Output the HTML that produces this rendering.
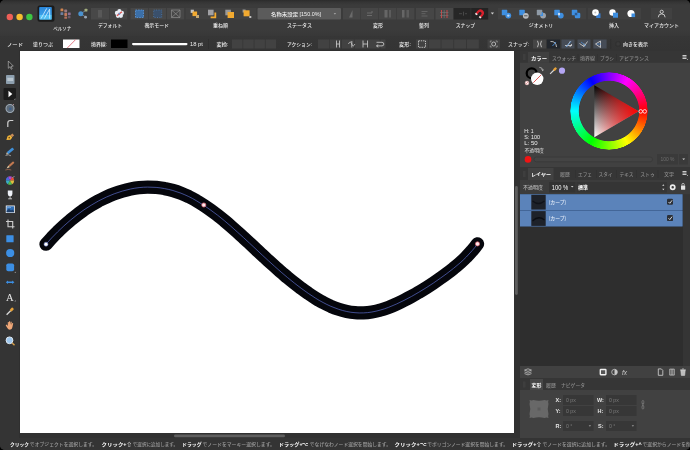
<!DOCTYPE html>
<html lang="ja"><head><meta charset="utf-8"><title>Affinity Designer</title>
<style>
html,body{margin:0;padding:0;background:#000;}
body{width:690px;height:450px;overflow:hidden;position:relative;font-family:"Liberation Sans","Noto Sans CJK JP",sans-serif;}
#win{position:absolute;left:0;top:0;width:690px;height:450px;background:#393939;border-radius:5px 5px 5px 5px;overflow:hidden;}
.abs{position:absolute;}
#wheel{position:absolute;left:570.2px;top:72.3px;width:78px;height:78px;border-radius:50%;
background:conic-gradient(from 90deg,#ff0000,#ffff00,#00ff00,#00ffff,#0000ff,#ff00ff,#ff0000);
-webkit-mask:radial-gradient(circle closest-side,transparent 0,transparent 76.5%,#000 78.5%,#000 98.5%,transparent 100%);
mask:radial-gradient(circle closest-side,transparent 0,transparent 76.5%,#000 78.5%,#000 98.5%,transparent 100%);}
svg{position:absolute;left:0;top:0;will-change:transform;}
text{font-family:"Liberation Sans","Noto Sans CJK JP",sans-serif;}
.l{font-size:4.800px;fill:#ececec;font-weight:500;}
.b{font-weight:bold;fill:#fff;}
.d{fill:#8a8a8a;}
.s{fill:#9a9a9a;}
</style></head><body>
<div id="win">
<!-- backgrounds -->
<div class="abs" style="left:0;top:0;width:690px;height:36px;background:linear-gradient(#2b2b2b 0,#343434 2px,#3b3b3b 5px,#3b3b3b 30px,#383838 36px)"></div>
<div class="abs" style="left:0;top:36px;width:690px;height:15px;background:linear-gradient(#363636,#343434)"></div>
<div class="abs" style="left:0;top:51px;width:20px;height:388px;background:#343434"></div>
<div class="abs" style="left:18.8px;top:49.5px;width:501.2px;height:389px;background:#2f2f2f"></div>
<div class="abs" style="left:20px;top:51.2px;width:493.5px;height:382.1px;background:#fff"></div>
<div class="abs" style="left:20px;top:433.3px;width:500px;height:4.7px;background:#313131"></div>
<div class="abs" style="left:513.5px;top:51px;width:6px;height:387px;background:#313131"></div>
<div class="abs" style="left:520px;top:51px;width:170px;height:387px;background:#414141"></div>
<div class="abs" style="left:0;top:438px;width:690px;height:12px;background:#343434"></div>
<div id="wheel"></div>
<svg id="ui" width="690" height="450" viewBox="0 0 690 450">
<g id="top">
<!-- traffic lights -->
<circle cx="9.8" cy="17" r="3.2" fill="#ee5f57"/><circle cx="19.6" cy="17" r="3.2" fill="#f6bd2f"/><circle cx="29.4" cy="17" r="3.2" fill="#3ec544"/>
<!-- persona -->
<rect x="37.500" y="5.600" width="17" height="16.200" rx="2" fill="#1b1b1b"/>
<defs><linearGradient id="pg" x1="0" y1="0" x2="0" y2="1"><stop offset="0" stop-color="#2b86d8"/><stop offset="0.62" stop-color="#3aa0ea"/><stop offset="0.66" stop-color="#55c4f6"/><stop offset="1" stop-color="#4fbef4"/></linearGradient></defs>
<rect x="39.200" y="7.100" width="12.600" height="12.700" rx=".8" fill="url(#pg)"/>
<path d="M41 18.600 L46.800 8.300 M44.300 18.600 L49.600 9.200 L49.600 18.600" stroke="#d6f0ff" stroke-width="0.800" fill="none"/>
<g><rect x="60.500" y="8.500" width="2.800" height="2.800" rx=".6" fill="#cf8450"/><rect x="64.300" y="9.600" width="2.800" height="2.800" rx=".6" fill="#9a7a82"/><rect x="60.500" y="12.300" width="2.800" height="2.800" rx=".6" fill="#6f7fa0"/><rect x="64.300" y="13.100" width="2.800" height="2.800" rx=".6" fill="#c47a5e"/><rect x="67.900" y="12.400" width="2.800" height="2.800" rx=".6" fill="#8a6f96"/><rect x="64.300" y="16.400" width="2.800" height="2.400" rx=".6" fill="#b0705e"/><rect x="67.900" y="15.900" width="2.600" height="2.400" rx=".6" fill="#6a5a6a"/></g>
<g><path d="M81 13.700 L86 10.200 M81 13.700 L85.500 17" stroke="#7f93a3" stroke-width="0.800"/><circle cx="80.800" cy="13.700" r="2.500" fill="#4a92cf"/><rect x="84.600" y="8.700" width="2.800" height="2.800" rx=".5" fill="#a3ad7e"/><circle cx="85.600" cy="17.200" r="1.400" fill="#9aa6b4"/></g>
<text class="l" x="62.200" y="30.200" text-anchor="middle" textLength="18" lengthAdjust="spacingAndGlyphs">ペルソナ</text>
<!-- default group -->
<rect x="91" y="8" width="18" height="11.5" fill="#484848"/><rect x="109.7" y="8" width="17.5" height="11.5" fill="#454545"/>
<rect x="98" y="10" width="4" height="7.5" fill="#585858"/>
<g transform="translate(119.400,13.700)"><g fill="#e9eef6"><circle cx="0" cy="-2.6" r="2.1"/><circle cx="2.5" cy="-.8" r="2.1"/><circle cx="1.5" cy="2.1" r="2.1"/><circle cx="-1.5" cy="2.1" r="2.1"/><circle cx="-2.5" cy="-.8" r="2.1"/></g><path d="M-2.5 2 L2.5 -2" stroke="#e0524a" stroke-width="1.3"/><circle cx="0" cy="0" r="1" fill="#6f8fd0"/></g>
<text class="l" x="110" y="27.300" text-anchor="middle" textLength="24" lengthAdjust="spacingAndGlyphs">デフォルト</text>
<!-- view mode -->
<rect x="130.5" y="8" width="17.5" height="11.5" fill="#474747"/><rect x="148.7" y="8" width="17.5" height="11.5" fill="#474747"/><rect x="166.9" y="8" width="17.3" height="11.5" fill="#474747"/>
<rect x="135.5" y="10" width="8" height="7.5" fill="#3b6fa8" stroke="#5a9be0" stroke-width="0.8" stroke-dasharray="1.6 1"/>
<rect x="153.7" y="10" width="8" height="7.5" fill="#3a506c" stroke="#4a78b0" stroke-width="0.8" stroke-dasharray="1 1.4"/>
<path d="M171.5 10 H180 V17.5 H171.5 Z M171.5 10 L180 17.5 M180 10 L171.5 17.5" stroke="#8c8c8c" stroke-width="0.7" fill="none"/>
<text class="l" x="156.700" y="27.300" text-anchor="middle" textLength="24.500" lengthAdjust="spacingAndGlyphs">表示モード</text>
<!-- order -->
<g id="ord">
<rect x="185.500" y="8" width="71" height="11.500" fill="#414141"/>
<rect x="190.700" y="9.700" width="3.200" height="3.200" fill="#c4c4c4"/><rect x="192.500" y="11.500" width="4.600" height="4.600" fill="#f2aa30"/><rect x="196" y="15" width="3" height="3" fill="#c8aa72"/>
<rect x="208" y="9.700" width="5.600" height="5.600" fill="#a0a0a4"/><path d="M215.300 12.600 V17.300 H210.600" stroke="#f2aa30" stroke-width="1.800" fill="none"/>
<rect x="225.300" y="9.700" width="5.600" height="5.600" fill="#9a9a9a"/><rect x="227.600" y="12" width="6.400" height="6" fill="#f2aa30"/>
<rect x="242.600" y="9.500" width="3" height="3" fill="#9a9a9a"/><rect x="243.600" y="10.300" width="6" height="6" fill="#f2aa30"/><rect x="249.300" y="16" width="2" height="2" fill="#c0c0c0"/>
</g>
<text class="l" x="220.5" y="27.300" text-anchor="middle" textLength="15" lengthAdjust="spacingAndGlyphs">重ね順</text>
<!-- status -->
<rect x="257.5" y="8" width="83.5" height="11.5" rx="1" fill="#5b5b5b"/>
<text x="296" y="15.6" text-anchor="middle" textLength="50" lengthAdjust="spacingAndGlyphs" style="font-size:5px;fill:#f2f2f2;font-weight:500">名称未設定 [150.0%]</text>
<path d="M333.7 13.2 l1.2 1.4 l1.2 -1.4 Z" fill="#bdbdbd"/>
<text class="l" x="299.5" y="27.300" text-anchor="middle" textLength="25" lengthAdjust="spacingAndGlyphs">ステータス</text>
<!-- transform group -->
<rect x="343" y="8" width="17.3" height="11.5" fill="#464646"/><rect x="361" y="8" width="17.3" height="11.5" fill="#464646"/><rect x="379" y="8" width="17.3" height="11.5" fill="#464646"/><rect x="397" y="8" width="17.3" height="11.5" fill="#464646"/>
<path d="M349 17.5 L352.5 10 V17.5 Z" fill="#6a6a6a"/><path d="M367 13 h5 v-2 M367 15.5 h5" stroke="#6a6a6a" stroke-width="1" fill="none"/><rect x="384.5" y="10" width="3" height="7.5" fill="#666"/><rect x="389" y="10" width="2" height="7.5" fill="#5c5c5c"/><rect x="402" y="10" width="2.5" height="7.5" fill="#666"/><rect x="406.5" y="10" width="2.5" height="7.5" fill="#5c5c5c"/>
<text class="l" x="378" y="27.300" text-anchor="middle" textLength="10" lengthAdjust="spacingAndGlyphs">変形</text>
<!-- align -->
<rect x="416" y="8" width="18" height="11.5" fill="#464646"/>
<path d="M421.5 11.5 h6 M421.5 13.7 h4 M421.5 16 h6" stroke="#636363" stroke-width="1"/>
<text class="l" x="424" y="27.300" text-anchor="middle" textLength="10" lengthAdjust="spacingAndGlyphs">整列</text>
<!-- snap -->
<rect x="435.5" y="8" width="17.5" height="11.5" fill="#484848"/><rect x="453.7" y="8" width="17" height="11.5" fill="#262626"/><rect x="471.2" y="8" width="17" height="11.5" fill="#232323"/>
<path d="M441.5 10 v8 M447 10 v8" stroke="#d84848" stroke-width="0.9"/><path d="M444.2 10 v8 M440 12.5 h8.5 M440 15.5 h8.5" stroke="#777" stroke-width="0.6"/>
<path d="M459 13.7 h3 M463.5 11.7 v4 M465 13.7 h2" stroke="#4c4c4c" stroke-width="0.9"/>
<g transform="translate(480,13.5) rotate(40)"><path d="M-3.6 3 V-0.5 A3.6 3.6 0 0 1 3.6 -0.5 V3 H1.4 V-0.3 A1.4 1.4 0 0 0 -1.4 -0.3 V3 Z" fill="#d8202c"/><rect x="-3.6" y="2" width="2.2" height="1.6" fill="#eee"/><rect x="1.4" y="2" width="2.2" height="1.6" fill="#eee"/></g>
<path d="M490.8 12.6 l1.6 1.9 l1.6 -1.9 Z" fill="#d0d0d0"/>
<text class="l" x="465.5" y="27.300" text-anchor="middle" textLength="19.5" lengthAdjust="spacingAndGlyphs">スナップ</text>
<!-- geometry -->
<rect x="498" y="8" width="88" height="11.5" fill="#414141"/>
<g id="geo" transform="translate(-1.2,0.300)">
<rect x="503" y="9.5" width="5.5" height="5.5" rx=".6" fill="#3f8fe0"/><circle cx="509.5" cy="15.3" r="2.9" fill="#3f8fe0"/><circle cx="509.5" cy="15.3" r="1.2" fill="#bcd8f4"/>
<rect x="520.5" y="9.5" width="5.5" height="5.5" rx=".6" fill="#3f8fe0"/><circle cx="527" cy="15.5" r="2.9" fill="#b9bcc0"/><rect x="525.3" y="15" width="3.4" height="1" fill="#555"/>
<rect x="538" y="9.5" width="5.5" height="5.5" rx=".6" fill="#8f9aa6"/><circle cx="544.3" cy="15.3" r="2.9" fill="#9aa2ac"/><path d="M541.5 15 h2 v-3" stroke="#3f8fe0" stroke-width="1.4" fill="none"/>
<rect x="555.5" y="9.5" width="5.5" height="5.5" rx=".6" fill="#3f8fe0"/><circle cx="562" cy="15.3" r="2.9" fill="#3f8fe0"/><rect x="559.3" y="12.6" width="1.8" height="2.4" fill="#d8e6f6"/>
<rect x="573" y="9.5" width="5.5" height="5.5" rx=".6" fill="#3f8fe0"/><rect x="576" y="12.5" width="5.5" height="5.5" rx="1.2" fill="#3f8fe0"/><rect x="576" y="12.5" width="2.5" height="2.5" fill="#2a5a94"/>
</g>
<text class="l" x="541" y="27.300" text-anchor="middle" textLength="24.5" lengthAdjust="spacingAndGlyphs">ジオメトリ</text>
<!-- insert -->
<rect x="588" y="8" width="53" height="11.5" fill="#414141"/>
<rect x="596.200" y="13.300" width="4.300" height="4.700" fill="#3a7fd0"/><circle cx="595.500" cy="12.600" r="3.300" fill="#fff"/><circle cx="595.300" cy="12.400" r="1" fill="#c4c4c4"/>
<circle cx="612.5" cy="12.5" r="3.2" fill="#fff"/><rect x="613" y="12.7" width="5" height="5" fill="#3f8fe0"/>
<circle cx="631" cy="13.5" r="3.6" fill="#fff"/><rect x="631.5" y="13.5" width="3.6" height="3.6" fill="#3f8fe0"/>
<text class="l" x="614" y="27.300" text-anchor="middle" textLength="10" lengthAdjust="spacingAndGlyphs">挿入</text>
<!-- account -->
<rect x="651" y="8" width="21" height="11.5" fill="#414141"/>
<circle cx="661.7" cy="11.8" r="1.6" fill="none" stroke="#e6e6e6" stroke-width="0.8"/><path d="M658.3 17.3 a3.4 3.4 0 0 1 6.8 0" fill="none" stroke="#e6e6e6" stroke-width="0.8"/>
<text class="l" x="661.5" y="27.300" text-anchor="middle" textLength="35" lengthAdjust="spacingAndGlyphs">マイアカウント</text>
</g>

<g id="ctx">
<text class="l" x="15" y="45.600" text-anchor="middle" textLength="16" lengthAdjust="spacingAndGlyphs">ノード</text>
<text class="l" x="43" y="45.600" text-anchor="middle" textLength="20" lengthAdjust="spacingAndGlyphs">塗りつぶ</text>
<rect x="63" y="39.5" width="16.5" height="8.5" fill="#fff"/><path d="M67.300 48 L75.700 39.500" stroke="#e06a78" stroke-width="0.900"/>
<text class="l" x="99" y="45.600" text-anchor="middle" textLength="16" lengthAdjust="spacingAndGlyphs">境界線:</text>
<rect x="111" y="39.5" width="16.5" height="8.5" fill="#000"/>
<rect x="132" y="42.9" width="55.5" height="2.3" rx="1.1" fill="#fff"/>
<text class="l" x="196.5" y="45.600" text-anchor="middle" textLength="13" lengthAdjust="spacingAndGlyphs">18 pt</text>
<rect x="208" y="39" width="0.6" height="10" fill="#2c2c2c"/>
<text class="l" x="222.5" y="45.600" text-anchor="middle" textLength="12" lengthAdjust="spacingAndGlyphs">変換:</text>
<g fill="#424242"><rect x="232" y="39.5" width="10.5" height="9"/><rect x="243.2" y="39.5" width="10.5" height="9"/><rect x="254.4" y="39.5" width="10.5" height="9"/><rect x="265.6" y="39.5" width="10.5" height="9"/></g>
<text class="l" x="299.5" y="45.600" text-anchor="middle" textLength="25" lengthAdjust="spacingAndGlyphs">アクション:</text>
<g fill="#424242"><rect x="318" y="39.5" width="11" height="9"/><rect x="329.7" y="39.5" width="11.5" height="9"/><rect x="341.9" y="39.5" width="12" height="9"/><rect x="354.6" y="39.5" width="12" height="9"/><rect x="367.3" y="39.5" width="12.5" height="9"/><rect x="380.5" y="39.5" width="5" height="9"/></g>
<g stroke="#d2d2d2" stroke-width="0.8" fill="none">
<path d="M336.5 40.5 v7 M339.5 40.5 v7 M336.5 44 h3"/>
<path d="M348.5 44 c1 -2.5 2.5 -2.5 3.3 0 c.8 2.5 2 2.500 3 0 M351.8 41 v6.500"/>
<path d="M363 40.500 v7 M367.500 40.500 v7 M363 44 h4.500"/>
<path d="M376.500 42.300 h5.500 a1.800 1.800 0 0 1 0 3.600 h-5.500 M378.200 44.600 l-1.700 1.300 l1.700 1.300"/>
</g>
<text class="l" x="405" y="45.600" text-anchor="middle" textLength="12" lengthAdjust="spacingAndGlyphs">変形:</text>
<g fill="#424242"><rect x="416" y="39.5" width="12" height="9"/><rect x="428.7" y="39.5" width="12" height="9"/><rect x="441.4" y="39.5" width="12" height="9"/><rect x="454.1" y="39.5" width="12" height="9"/><rect x="466.8" y="39.5" width="12" height="9"/><rect x="487.5" y="39.5" width="12.500" height="9"/></g>
<rect x="418.500" y="40.800" width="7" height="6.500" fill="none" stroke="#e0e0e0" stroke-width="0.800" stroke-dasharray="1.400 .9"/>
<circle cx="493.700" cy="44" r="2" fill="none" stroke="#d0d0d0" stroke-width="0.800"/><path d="M490.300 41 h1.500 M490.300 41 v1.500 M497.200 41 h-1.500 M497.200 41 v1.500 M490.300 47 h1.500 M490.300 47 v-1.500 M497.200 47 h-1.500 M497.200 47 v-1.500" stroke="#bbb" stroke-width="0.600"/>
<text class="l" x="518.500" y="45.600" text-anchor="middle" textLength="21" lengthAdjust="spacingAndGlyphs">スナップ:</text>
<rect x="533" y="39.500" width="13" height="9" fill="#454545"/><rect x="547" y="39.500" width="13" height="9" fill="#22262c"/><rect x="561.500" y="39.500" width="13" height="9" fill="#464c56"/><rect x="577.500" y="39.500" width="13" height="9" fill="#464c56"/><rect x="593.300" y="39.500" width="13.300" height="9" fill="#464c56"/>
<g stroke="#dcdcdc" stroke-width="0.800" fill="none">
<path d="M537.500 40.800 q2 3.200 0 6.400 M541.500 40.800 q-2 3.200 0 6.400"/>
<path d="M550.500 41.500 q5.500 -.5 6 5.500"/>
<path d="M565 45.500 h7 M566.500 47 l4 -6 M569.800 47 l2 -3"/>
<path d="M579.500 43.500 l4.500 3 l3.500 -5 M584 46.500 v-3"/>
<path d="M595.500 44 l5 -3 v6.500 Z"/>
</g>
<path d="M552.500 46 l3.500 -4" stroke="#4a90e0" stroke-width="0.900"/>
<path d="M566 47 l5 -5.500 M581 42 l5 4 M597 44 h4" stroke="#4a90e0" stroke-width="0.700"/>
<rect x="610.500" y="39" width="0.600" height="10" fill="#2c2c2c"/>
<rect x="616" y="41.800" width="4.200" height="4.200" rx=".8" fill="#3a3a3a" stroke="#2a2a2a" stroke-width="0.500"/>
<text class="l" x="635.500" y="45.600" text-anchor="middle" textLength="25" lengthAdjust="spacingAndGlyphs">向きを表示</text>
</g>

<g id="tools">
<!-- move -->
<path d="M8.300 61 L8.300 68.300 L10 66.700 L11.200 69.300 L12.200 68.800 L11 66.300 L13.300 66.100 Z" fill="#2c2c2c" stroke="#c4c4c4" stroke-width="0.600"/>
<!-- artboard -->
<rect x="6" y="75" width="8.500" height="9" rx=".8" fill="#8d9fae"/><rect x="7.300" y="77.800" width="5.900" height="3.200" fill="#b9c6d0"/>
<!-- node (active) -->
<rect x="3.500" y="88" width="12.500" height="12" rx="1" fill="#1c1c1c"/><path d="M8.500 90.800 L12.300 94 L8.500 97.200 Z" fill="#fff"/><path d="M13.800 99.800 l1.600 0 l0 -1.600 Z" fill="#999"/>
<!-- spiral -->
<circle cx="10" cy="108.500" r="4" fill="#5c6a78" stroke="#9eaab6" stroke-width="1.100"/><circle cx="10.300" cy="108.700" r="1.300" fill="#3e5f8c"/><path d="M12.500 105.500 l1.500 -1.500" stroke="#c89aa0" stroke-width="0.800"/>
<!-- corner -->
<path d="M7.800 127 V123 Q7.800 120.500 10.300 120.500 H13.300" fill="none" stroke="#d0d0d0" stroke-width="1.200"/>
<!-- pen -->
<g transform="translate(9.500,137.500) rotate(-38)"><path d="M-4 0 L-0.500 -2.400 L2.200 -1.600 L2.200 1.600 L-0.500 2.400 Z" fill="#f2b53a"/><rect x="2.200" y="-1.300" width="2.600" height="2.600" fill="#c98e5a"/><circle cx="-0.300" cy="0" r=".8" fill="#6a4a1a"/></g>
<!-- pencil -->
<g transform="translate(10.300,151) rotate(-40)"><rect x="-3.500" y="-1.300" width="7.500" height="2.600" rx=".6" fill="#3f8fd8"/><path d="M-3.500 -1.300 L-5.500 0 L-3.500 1.300 Z" fill="#d8c8b0"/></g><path d="M5.500 155.500 q3 -1.500 5.500 .3" stroke="#b8b8b8" stroke-width="0.700" fill="none"/>
<!-- brush -->
<g transform="translate(10.500,165) rotate(-42)"><rect x="-2" y="-1.100" width="6.500" height="2.200" rx=".8" fill="#c07850"/><path d="M-2 -1.100 L-5.300 0 L-2 1.100 Z" fill="#e6c8a0"/></g><path d="M5.300 170 q3 -1.200 6 0" stroke="#a06a50" stroke-width="0.800" fill="none"/>
<!-- color wheel tool -->
<g transform="translate(10,180.500)"><path d="M0 0 L4.200 0 A4.200 4.200 0 0 0 2.100 -3.640 Z" fill="#e8503a"/><path d="M0 0 L2.100 -3.640 A4.200 4.200 0 0 0 -2.100 -3.640 Z" fill="#b04ad0"/><path d="M0 0 L-2.100 -3.640 A4.200 4.200 0 0 0 -4.200 0 Z" fill="#4a6ae0"/><path d="M0 0 L-4.200 0 A4.200 4.200 0 0 0 -2.100 3.640 Z" fill="#38b0c8"/><path d="M0 0 L-2.100 3.640 A4.200 4.200 0 0 0 2.100 3.640 Z" fill="#50c050"/><path d="M0 0 L2.100 3.640 A4.200 4.200 0 0 0 4.200 0 Z" fill="#e0c040"/><path d="M2.600 -2.600 l1.800 -1.800" stroke="#bbb" stroke-width="0.800"/></g>
<!-- glass -->
<path d="M7.800 190.500 h4.600 v3.600 a2.300 2.300 0 0 1 -4.600 0 Z" fill="#eef2f8"/><path d="M10.100 196.400 v2.200 M8.200 198.800 h3.800" stroke="#e6e6e6" stroke-width="0.800"/>
<!-- image -->
<rect x="5.800" y="205.500" width="9" height="7.500" fill="#f4f4f4"/><rect x="6.600" y="206.300" width="7.400" height="5.900" fill="#2f6fb8"/><path d="M6.600 211 l2.400 -2.200 l2 1.700 l1.400 -1 l1.600 1.500 v1.200 h-7.400 Z" fill="#1f3f68"/><path d="M7 208 q2 -1.600 4 -.4" stroke="#9fc4ec" stroke-width="0.700" fill="none"/>
<!-- crop -->
<path d="M8 219.500 v7.200 h6.500 M6 221.500 h6.700 v7" fill="none" stroke="#cfcfcf" stroke-width="1.100"/>
<!-- rect -->
<rect x="6.300" y="235.300" width="7.300" height="7" rx=".5" fill="#3c8fe4"/>
<!-- ellipse -->
<circle cx="10.200" cy="253" r="4.100" fill="#3c8fe4"/>
<!-- rounded rect -->
<rect x="6.300" y="263.500" width="7.800" height="7.800" rx="1.800" fill="#3c8fe4"/><path d="M14.300 273 l1.500 0 l0 -1.500 Z" fill="#999"/>
<!-- arrows -->
<path d="M5.800 282.300 l2.200 -1.800 v1.100 h4.200 v-1.100 l2.200 1.800 l-2.200 1.800 v-1.100 h-4.200 v1.100 Z" fill="#3c8fe4"/>
<!-- text -->
<text x="9.700" y="300.800" text-anchor="middle" style="font-family:'Liberation Serif',serif;font-size:10.500px;fill:#e8e8e8">A</text><path d="M14.300 301.500 l1.500 0 l0 -1.500 Z" fill="#999"/>
<!-- eyedropper -->
<g transform="translate(10,311.300) rotate(-45)"><rect x="-4.800" y="-.7" width="6" height="1.400" fill="#d9d9d9"/><rect x="0.600" y="-1.300" width="3.800" height="2.600" rx=".8" fill="#e6a23a"/></g>
<!-- hand -->
<path d="M7 327.500 l-1.300 -2.300 l.9 -.6 l1.200 1.300 v-3.800 h1 v2.500 l.3 -3.300 h1 l.1 3.300 l.5 -2.900 h1 l-.2 3.200 l.8 -1.900 l.9 .3 l-.8 4 q-.3 2.400 -2.500 2.400 q-1.800 0 -2.900 -2.200 Z" fill="#f0a878"/>
<!-- zoom -->
<circle cx="9.500" cy="340.300" r="3.400" fill="#9fc8ee" stroke="#dfe9f2" stroke-width="1"/><path d="M12.200 343 l2.300 2.300" stroke="#d8a04a" stroke-width="1.400"/>
</g>

<!--CANVAS-->
<rect x="515" y="186" width="2.800" height="109" rx="1.400" fill="#5e5e5e"/>
<rect x="174" y="434.500" width="111" height="2.800" rx="1.400" fill="#5e5e5e"/>
<g id="curve">
<path d="M46.0 244.2 C47.9 242.1 49.8 240.0 51.7 237.9 C53.6 235.9 55.6 233.8 57.7 231.8 C59.7 229.8 61.8 227.8 63.9 225.9 C66.0 224.0 68.1 222.1 70.3 220.3 C72.5 218.4 74.8 216.6 77.0 214.9 C79.3 213.1 81.6 211.5 84.0 209.8 C86.4 208.2 88.8 206.7 91.2 205.2 C93.6 203.7 96.1 202.3 98.6 200.9 C101.2 199.6 103.7 198.3 106.3 197.1 C108.9 195.9 111.5 194.8 114.2 193.8 C116.9 192.8 119.6 191.9 122.3 191.1 C125.1 190.3 127.8 189.6 130.6 189.0 C133.4 188.4 136.2 187.9 139.1 187.6 C141.9 187.3 144.7 187.1 147.6 187.1 C150.4 187.1 153.3 187.2 156.1 187.4 C158.9 187.7 161.8 188.0 164.6 188.6 C167.4 189.1 170.1 189.7 172.9 190.5 C175.6 191.3 178.3 192.2 181.0 193.2 C183.6 194.2 186.2 195.4 188.8 196.6 C191.4 197.9 193.9 199.2 196.3 200.7 C198.8 202.1 201.2 203.6 203.6 205.2 C206.0 206.8 208.4 208.4 210.7 210.1 C213.0 211.8 215.3 213.5 217.6 215.2 C219.8 217.0 222.1 218.8 224.3 220.6 C226.5 222.5 228.6 224.3 230.8 226.2 C233.0 228.1 235.1 230.0 237.2 231.9 C239.3 233.8 241.4 235.7 243.5 237.6 C245.6 239.6 247.7 241.5 249.8 243.4 C251.9 245.4 253.9 247.3 256.0 249.2 C258.1 251.1 260.1 253.1 262.2 255.0 C264.3 256.9 266.3 258.8 268.4 260.7 C270.5 262.6 272.6 264.5 274.7 266.4 C276.8 268.3 279.0 270.2 281.1 272.1 C283.3 273.9 285.4 275.8 287.6 277.6 C289.8 279.4 292.0 281.2 294.3 283.0 C296.6 284.8 298.9 286.6 301.2 288.3 C303.5 290.1 305.9 291.8 308.3 293.4 C310.7 295.1 313.1 296.7 315.6 298.2 C318.0 299.7 320.5 301.2 323.1 302.5 C325.6 303.9 328.2 305.1 330.8 306.3 C333.4 307.4 336.0 308.4 338.7 309.3 C341.3 310.2 344.0 310.9 346.8 311.5 C349.5 312.1 352.2 312.5 355.0 312.7 C357.8 313.0 360.7 313.0 363.5 312.9 C366.3 312.8 369.1 312.5 371.9 312.0 C374.7 311.5 377.5 310.9 380.2 310.1 C383.0 309.4 385.7 308.4 388.4 307.4 C391.0 306.4 393.7 305.3 396.3 304.1 C398.9 302.9 401.5 301.7 404.0 300.4 C406.6 299.1 409.1 297.8 411.6 296.4 C414.0 295.1 416.5 293.7 418.9 292.2 C421.3 290.8 423.7 289.3 426.1 287.8 C428.5 286.3 430.8 284.8 433.2 283.2 C435.5 281.6 437.8 280.0 440.1 278.4 C442.4 276.8 444.7 275.2 446.9 273.5 C449.2 271.8 451.4 270.1 453.6 268.3 C455.8 266.6 458.0 264.8 460.1 262.9 C462.2 261.0 464.3 259.1 466.3 257.0 C468.3 255.0 470.2 252.9 472.1 250.7 C474.0 248.6 475.8 246.3 477.5 243.9" fill="none" stroke="#05060c" stroke-width="13.300" stroke-linecap="round"/>
<path d="M46.0 244.2 C47.9 242.1 49.8 240.0 51.7 237.9 C53.6 235.9 55.6 233.8 57.7 231.8 C59.7 229.8 61.8 227.8 63.9 225.9 C66.0 224.0 68.1 222.1 70.3 220.3 C72.5 218.4 74.8 216.6 77.0 214.9 C79.3 213.1 81.6 211.5 84.0 209.8 C86.4 208.2 88.8 206.7 91.2 205.2 C93.6 203.7 96.1 202.3 98.6 200.9 C101.2 199.6 103.7 198.3 106.3 197.1 C108.9 195.9 111.5 194.8 114.2 193.8 C116.9 192.8 119.6 191.9 122.3 191.1 C125.1 190.3 127.8 189.6 130.6 189.0 C133.4 188.4 136.2 187.9 139.1 187.6 C141.9 187.3 144.7 187.1 147.6 187.1 C150.4 187.1 153.3 187.2 156.1 187.4 C158.9 187.7 161.8 188.0 164.6 188.6 C167.4 189.1 170.1 189.7 172.9 190.5 C175.6 191.3 178.3 192.2 181.0 193.2 C183.6 194.2 186.2 195.4 188.8 196.6 C191.4 197.9 193.9 199.2 196.3 200.7 C198.8 202.1 201.2 203.6 203.6 205.2 C206.0 206.8 208.4 208.4 210.7 210.1 C213.0 211.8 215.3 213.5 217.6 215.2 C219.8 217.0 222.1 218.8 224.3 220.6 C226.5 222.5 228.6 224.3 230.8 226.2 C233.0 228.1 235.1 230.0 237.2 231.9 C239.3 233.8 241.4 235.7 243.5 237.6 C245.6 239.6 247.7 241.5 249.8 243.4 C251.9 245.4 253.9 247.3 256.0 249.2 C258.1 251.1 260.1 253.1 262.2 255.0 C264.3 256.9 266.3 258.8 268.4 260.7 C270.5 262.6 272.6 264.5 274.7 266.4 C276.8 268.3 279.0 270.2 281.1 272.1 C283.3 273.9 285.4 275.8 287.6 277.6 C289.8 279.4 292.0 281.2 294.3 283.0 C296.6 284.8 298.9 286.6 301.2 288.3 C303.5 290.1 305.9 291.8 308.3 293.4 C310.7 295.1 313.1 296.7 315.6 298.2 C318.0 299.7 320.5 301.2 323.1 302.5 C325.6 303.9 328.2 305.1 330.8 306.3 C333.4 307.4 336.0 308.4 338.7 309.3 C341.3 310.2 344.0 310.9 346.8 311.5 C349.5 312.1 352.2 312.5 355.0 312.7 C357.8 313.0 360.7 313.0 363.5 312.9 C366.3 312.8 369.1 312.5 371.9 312.0 C374.7 311.5 377.5 310.9 380.2 310.1 C383.0 309.4 385.7 308.4 388.4 307.4 C391.0 306.4 393.7 305.3 396.3 304.1 C398.9 302.9 401.5 301.7 404.0 300.4 C406.6 299.1 409.1 297.8 411.6 296.4 C414.0 295.1 416.5 293.7 418.9 292.2 C421.3 290.8 423.7 289.3 426.1 287.8 C428.5 286.3 430.8 284.8 433.2 283.2 C435.5 281.6 437.8 280.0 440.1 278.4 C442.4 276.8 444.7 275.2 446.9 273.5 C449.2 271.8 451.4 270.1 453.6 268.3 C455.8 266.6 458.0 264.8 460.1 262.9 C462.2 261.0 464.3 259.1 466.3 257.0 C468.3 255.0 470.2 252.9 472.1 250.7 C474.0 248.6 475.8 246.3 477.5 243.9" fill="none" stroke="#5a6cc8" stroke-width="0.7"/>
<circle cx="46" cy="244.2" r="2" fill="#fff" stroke="#6a7ac8" stroke-width="0.6"/>
<circle cx="203.8" cy="205" r="2.1" fill="#ffe8ec" stroke="#e06070" stroke-width="0.7"/>
<circle cx="477.5" cy="243.9" r="2.1" fill="#ffe8ec" stroke="#e06070" stroke-width="0.7"/>
</g>
<g id="panel">
<!-- color tab header -->
<rect x="520" y="51" width="170" height="11.700" fill="#363636"/>
<rect x="528" y="52" width="21" height="10.700" fill="#404040"/>
<rect x="523" y="54" width="2.500" height="6" fill="#3e3e3e"/>
<text class="l b" x="539" y="59.700" text-anchor="middle" textLength="16" lengthAdjust="spacingAndGlyphs">カラー</text>
<text class="l d" x="564" y="59.700" text-anchor="middle" textLength="24" lengthAdjust="spacingAndGlyphs">スウォッチ</text>
<text class="l d" x="587.500" y="59.700" text-anchor="middle" textLength="15" lengthAdjust="spacingAndGlyphs">境界線</text>
<text class="l d" x="607" y="59.700" text-anchor="middle" textLength="14" lengthAdjust="spacingAndGlyphs">ブラシ</text>
<text class="l d" x="634" y="59.700" text-anchor="middle" textLength="30" lengthAdjust="spacingAndGlyphs">アピアランス</text>
<path d="M578 54 v7 M597.500 54 v7 M616.500 54 v7" stroke="#2e2e2e" stroke-width="0.500"/>
<path d="M682.500 55.500 h4 M682.500 57 h4 M682.500 58.500 h4" stroke="#ddd" stroke-width="0.900"/><path d="M686.800 59 l1.300 0 l-.65 .9 Z" fill="#ddd"/>
<!-- stroke/fill selectors -->
<circle cx="531.700" cy="73.300" r="5" fill="none" stroke="#000" stroke-width="2.200"/>
<circle cx="537.200" cy="78.800" r="6.200" fill="#fff"/><path d="M533.300 82.700 L541.100 74.900" stroke="#e05a5a" stroke-width="1"/>
<circle cx="527" cy="83" r="1.900" fill="#fff" stroke="#e8a0a0" stroke-width="0.500"/><path d="M526 84 l2 -2" stroke="#e05a5a" stroke-width="0.600"/>
<path d="M539.300 67.300 q3.300 -.2 3.400 3.400 M542.700 70.700 l-1 -1.200 M542.700 70.700 l1.100 -1.100" stroke="#cfcfcf" stroke-width="0.700" fill="none"/>
<g transform="translate(553.300,70.700) rotate(-45)"><rect x="-4.500" y="-.6" width="5.500" height="1.200" fill="#d8d8d8"/><rect x=".6" y="-1.200" width="3.600" height="2.400" rx=".7" fill="#e6a23a"/></g>
<circle cx="562" cy="70.700" r="3.100" fill="#b4a6f4"/>
<!-- triangle -->
<defs>
<linearGradient id="tg1" gradientUnits="userSpaceOnUse" x1="594.300" y1="111.300" x2="638.500" y2="111.300"><stop offset="0" stop-color="#ff0000" stop-opacity="0"/><stop offset="1" stop-color="#ff0000" stop-opacity="1"/></linearGradient>
<linearGradient id="tg0" gradientUnits="userSpaceOnUse" x1="594.300" y1="85.800" x2="594.300" y2="136.800"><stop offset="0" stop-color="#000"/><stop offset="1" stop-color="#fff"/></linearGradient>
</defs>
<path d="M594.300 85.300 L638.500 111.300 L594.300 137.300 Z" fill="url(#tg0)"/>
<path d="M594.300 85.300 L638.500 111.300 L594.300 137.300 Z" fill="url(#tg1)"/>
<circle cx="640.700" cy="111.400" r="1.800" fill="none" stroke="#fff" stroke-width="0.800"/><circle cx="644.700" cy="111.400" r="1.800" fill="none" stroke="#fff" stroke-width="0.800"/>
<!-- HSL -->
<text x="524.300" y="132.500" textLength="9.300" lengthAdjust="spacingAndGlyphs" style="font-size:5.900px;fill:#f0f0f0">H: 1</text>
<text x="524.300" y="138.700" textLength="15.600" lengthAdjust="spacingAndGlyphs" style="font-size:5.900px;fill:#f0f0f0">S: 100</text>
<text x="524.300" y="145.100" textLength="13.400" lengthAdjust="spacingAndGlyphs" style="font-size:5.900px;fill:#f0f0f0">L: 50</text>
<text class="l" x="524.500" y="152.300" textLength="19.500" lengthAdjust="spacingAndGlyphs" style="fill:#c8c8c8">不透明度</text>
<circle cx="528" cy="159.400" r="3.300" fill="#f01414"/>
<rect x="534" y="157" width="118.500" height="4.800" rx="2.400" fill="#444" stroke="#383838" stroke-width="0.800"/>
<rect x="657" y="154" width="21" height="10.500" fill="#3a3a3a"/><rect x="679" y="154" width="9" height="10.500" fill="#3a3a3a"/>
<text class="l" x="667.500" y="161.200" text-anchor="middle" textLength="14" lengthAdjust="spacingAndGlyphs" style="fill:#6e6e6e">100 %</text>
<path d="M682.300 158.400 l1.400 1.700 l1.400 -1.700 Z" fill="#d6d6d6"/>
<!-- layers header -->
<rect x="520" y="167" width="170" height="13" fill="#363636"/>
<rect x="528" y="168" width="25.500" height="12" fill="#424242"/>
<rect x="523" y="171" width="2.500" height="6" fill="#3e3e3e"/>
<text class="l b" x="541" y="176.200" text-anchor="middle" textLength="20" lengthAdjust="spacingAndGlyphs">レイヤー</text>
<text class="l d" x="565" y="176.200" text-anchor="middle" textLength="10" lengthAdjust="spacingAndGlyphs">履歴</text>
<text class="l d" x="585" y="176.200" text-anchor="middle" textLength="14" lengthAdjust="spacingAndGlyphs">エフェ</text>
<text class="l d" x="605.500" y="176.200" text-anchor="middle" textLength="14" lengthAdjust="spacingAndGlyphs">スタイ</text>
<text class="l d" x="626.500" y="176.200" text-anchor="middle" textLength="14" lengthAdjust="spacingAndGlyphs">テキス</text>
<text class="l d" x="647.500" y="176.200" text-anchor="middle" textLength="14.500" lengthAdjust="spacingAndGlyphs">ストゥ</text>
<text class="l d" x="669" y="176.200" text-anchor="middle" textLength="10" lengthAdjust="spacingAndGlyphs">文字</text>
<path d="M575.500 170 v8 M596.500 170 v8 M616.500 170 v8 M636.500 170 v8 M658 170 v8" stroke="#2e2e2e" stroke-width="0.500"/>
<path d="M682.500 171.500 h4 M682.500 173 h4 M682.500 174.500 h4" stroke="#ddd" stroke-width="0.900"/><path d="M686.800 175 l1.300 0 l-.65 .9 Z" fill="#ddd"/>
<!-- opacity row -->
<rect x="520" y="180" width="170" height="14.200" fill="#3c3c3c"/>
<text class="l" x="533" y="188.700" text-anchor="middle" textLength="20" lengthAdjust="spacingAndGlyphs" style="fill:#b4b4b4">不透明度</text>
<rect x="549" y="182" width="26.500" height="10.500" fill="#333"/>
<text x="560" y="189.600" text-anchor="middle" textLength="16.500" lengthAdjust="spacingAndGlyphs" style="font-size:6.800px;fill:#fafafa">100 %</text>
<path d="M570.900 186 l1.300 1.600 l1.300 -1.600 Z" fill="#ccc"/>
<rect x="576.500" y="182" width="90.500" height="10.500" fill="#353535"/>
<text class="l b" x="583" y="189" text-anchor="middle" textLength="10" lengthAdjust="spacingAndGlyphs">標準</text>
<path d="M662.200 185.700 l1.100 -1.400 l1.100 1.400 Z M662.200 188.800 l1.100 1.400 l1.100 -1.400 Z" fill="#e0e0e0"/>
<circle cx="672.700" cy="187.300" r="2.100" fill="none" stroke="#ececec" stroke-width="1.700"/>
<rect x="681" y="185.500" width="4.200" height="4.300" rx=".5" fill="#e4e4e4"/><path d="M681.900 185.500 v-.9 a1.200 1.200 0 0 1 2.400 0 v.9" fill="none" stroke="#e4e4e4" stroke-width="0.700"/>
<!-- list area -->
<rect x="520" y="194.200" width="163" height="171.800" fill="#2e2e2e"/>
<rect x="683" y="194.200" width="7" height="171.800" fill="#353535"/>
<rect x="520" y="194.300" width="162.500" height="32.100" fill="#32507c"/>
<rect x="520" y="194.300" width="162.500" height="15.800" fill="#5b83ba"/>
<rect x="520" y="210.600" width="162.500" height="15.800" fill="#5b83ba"/>
<rect x="531.300" y="194.800" width="14.400" height="14.800" fill="#1e222a"/><rect x="531.300" y="211.100" width="14.400" height="14.800" fill="#1e222a"/>
<path d="M532.500 201 q6 5 12 0" stroke="#10131a" stroke-width="1.300" fill="none"/><path d="M532.500 221 q6 -6 12 -1" stroke="#0c0e14" stroke-width="1.300" fill="none"/>
<text class="l" x="557.500" y="204" text-anchor="middle" textLength="17.500" lengthAdjust="spacingAndGlyphs" style="fill:#e2ebf8">(カーブ)</text>
<text class="l" x="557.500" y="220.300" text-anchor="middle" textLength="17.500" lengthAdjust="spacingAndGlyphs" style="fill:#e2ebf8">(カーブ)</text>
<rect x="667" y="198.800" width="6" height="6" rx="1.200" fill="#2a2f38"/><path d="M668.500 202 l1.300 1.300 l2.300 -3" stroke="#e8e8e8" stroke-width="0.900" fill="none"/>
<rect x="667" y="215.100" width="6" height="6" rx="1.200" fill="#2a2f38"/><path d="M668.500 218.300 l1.300 1.300 l2.300 -3" stroke="#e8e8e8" stroke-width="0.900" fill="none"/>
<!-- layers bottom toolbar -->
<rect x="520" y="366" width="170" height="12" fill="#414141"/>
<g transform="translate(0,0.600)">
<g fill="none" stroke="#cfcfcf" stroke-width="0.700"><path d="M524.500 369.500 l3.500 -1.300 l3.500 1.300 l-3.500 1.300 Z M524.500 371.300 l3.500 1.300 l3.500 -1.300 M524.500 373 l3.500 1.300 l3.500 -1.300"/></g>
<rect x="600.300" y="368.900" width="5.600" height="5.200" rx=".6" fill="#555" stroke="#f0f0f0" stroke-width="1.400"/>
<circle cx="614.500" cy="371.500" r="2.800" fill="none" stroke="#c8c8c8" stroke-width="0.800"/><path d="M614.500 368.700 a2.800 2.800 0 0 1 0 5.600 Z" fill="#c8c8c8"/>
<text x="624.500" y="374" text-anchor="middle" style="font-size:6.500px;font-style:italic;fill:#c8c8c8">fx</text>
<path d="M658.300 368.300 h3 l1.500 1.500 v4.900 h-4.500 Z" fill="none" stroke="#d8d8d8" stroke-width="0.800"/>
<path d="M669.700 368.500 h4.600 v6 h-4.600 Z M671.200 368.500 v6 M672.800 368.500 v6" fill="none" stroke="#d0d0d0" stroke-width="0.700"/>
<path d="M680.800 369.500 h4.400 l-.5 5.300 h-3.400 Z M680 369.300 h6 M682 368.300 h2" fill="#bdbdbd" stroke="#d0d0d0" stroke-width="0.600"/>
</g>
<!-- transform header -->
<rect x="520" y="378" width="170" height="12" fill="#363636"/>
<rect x="530" y="379" width="13" height="11" fill="#484848"/>
<rect x="523" y="381.500" width="2.500" height="6" fill="#3e3e3e"/>
<text class="l b" x="536.500" y="387" text-anchor="middle" textLength="10" lengthAdjust="spacingAndGlyphs">変形</text>
<text class="l d" x="551" y="387" text-anchor="middle" textLength="10" lengthAdjust="spacingAndGlyphs">履歴</text>
<text class="l d" x="573" y="387" text-anchor="middle" textLength="24" lengthAdjust="spacingAndGlyphs">ナビゲータ</text>
<!-- transform body -->
<rect x="520" y="390" width="170" height="48" fill="#414141"/>
<path d="M529.500 400 q2 .8 4 0 q5.500 1.600 11 0 q2 .8 4 0 q-.8 2 0 4 q-1.600 5 0 10 q-.8 2 0 4 q-2 -.8 -4 0 q-5.500 -1.600 -11 0 q-2 -.8 -4 0 q.8 -2 0 -4 q1.600 -5 0 -10 q.8 -2 0 -4 Z" fill="#686868"/>
<rect x="537.500" y="407.500" width="3" height="3" fill="#5a5a5a"/>
<g style="font-size:5.500px;fill:#e6e6e6;font-weight:bold"><text x="555.500" y="402.200">X:</text><text x="555.500" y="413.200">Y:</text><text x="555.500" y="428.200">R:</text><text x="597" y="402.200">W:</text><text x="597.500" y="413.200">H:</text><text x="598" y="428.200">S:</text></g>
<g fill="#373737"><rect x="563" y="395" width="30.500" height="10"/><rect x="563" y="406" width="30.500" height="10"/><rect x="563" y="421" width="30.500" height="10"/><rect x="606" y="395" width="30.500" height="10"/><rect x="606" y="406" width="30.500" height="10"/><rect x="606" y="421" width="30.500" height="10"/></g>
<g style="font-size:5.200px;fill:#7c7c7c"><text x="566" y="402.200">0 px</text><text x="566" y="413.200">0 px</text><text x="566" y="428.200">0 °</text><text x="609" y="402.200">0 px</text><text x="609" y="413.200">0 px</text><text x="609" y="428.200">0 °</text></g>
<path d="M588.700 425.300 l1.200 1.500 l1.200 -1.500 Z M631.700 425.300 l1.200 1.500 l1.200 -1.500 Z" fill="#999"/>
<g transform="translate(-1.200,3)"><rect x="643.200" y="397.500" width="1.800" height="3.500" rx=".9" fill="none" stroke="#8a8a8a" stroke-width="0.600"/><rect x="643.200" y="402.500" width="1.800" height="3.500" rx=".9" fill="none" stroke="#8a8a8a" stroke-width="0.600"/><path d="M644.100 400 v3.500" stroke="#8a8a8a" stroke-width="0.600"/></g>
</g>

<g id="status">
<text class="l b" x="10" y="446.300" textLength="19.0" lengthAdjust="spacingAndGlyphs">クリック</text>
<text class="l s" x="29.8" y="446.300" textLength="67.2" lengthAdjust="spacingAndGlyphs">でオブジェクトを選択します。</text>
<text class="l b" x="101.6" y="446.300" textLength="30.4" lengthAdjust="spacingAndGlyphs">クリック+⇧</text>
<text class="l s" x="132.8" y="446.300" textLength="45.2" lengthAdjust="spacingAndGlyphs">で選択に追加します。</text>
<text class="l b" x="182" y="446.300" textLength="19.6" lengthAdjust="spacingAndGlyphs">ドラッグ</text>
<text class="l s" x="202.4" y="446.300" textLength="72.6" lengthAdjust="spacingAndGlyphs">でノードをマーキー選択します。</text>
<text class="l b" x="278.7" y="446.300" textLength="30.3" lengthAdjust="spacingAndGlyphs">ドラッグ+⌥</text>
<text class="l s" x="309.8" y="446.300" textLength="81.2" lengthAdjust="spacingAndGlyphs">でなげなわノード選択を開始します。</text>
<text class="l b" x="394.6" y="446.300" textLength="31.9" lengthAdjust="spacingAndGlyphs">クリック+⌥</text>
<text class="l s" x="427.3" y="446.300" textLength="80.7" lengthAdjust="spacingAndGlyphs">でポリゴンノード選択を開始します。</text>
<text class="l b" x="511.7" y="446.300" textLength="30.0" lengthAdjust="spacingAndGlyphs">ドラッグ+⇧</text>
<text class="l s" x="542.5" y="446.300" textLength="67.5" lengthAdjust="spacingAndGlyphs">でノードを選択に追加します。</text>
<text class="l b" x="613.3" y="446.300" textLength="28.4" lengthAdjust="spacingAndGlyphs">ドラッグ+^</text>
<text class="l s" x="642.5" y="446.300" textLength="72.0" lengthAdjust="spacingAndGlyphs">で選択からノードを削除します。</text>
</g>

</svg>
</div>
</body></html>
